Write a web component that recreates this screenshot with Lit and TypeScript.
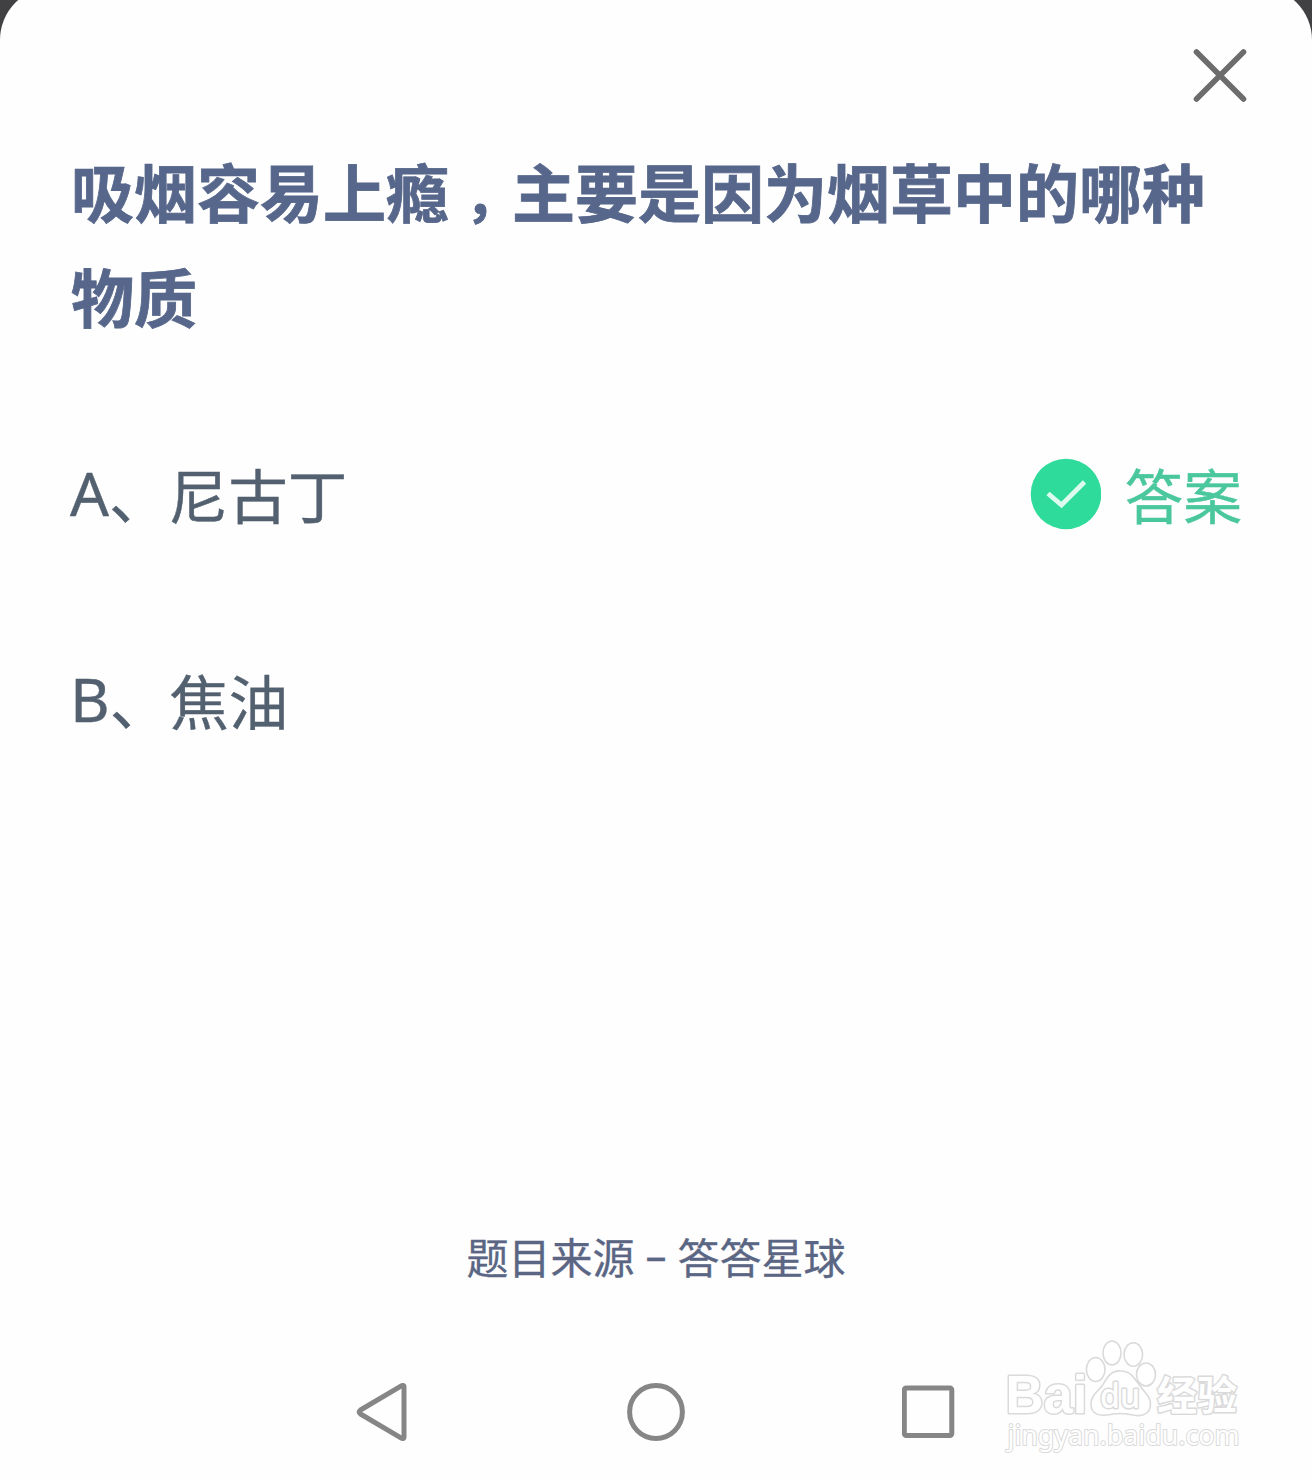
import { LitElement, html, css, svg, nothing } from "lit";
import { customElement, property } from "lit/decorators.js";

interface Choice {
  letter: string;
  text: string;
  correct: boolean;
}

const CHOICES: Choice[] = [
  { letter: "A", text: "尼古丁", correct: true },
  { letter: "B", text: "焦油", correct: false },
];

@customElement("choice-row")
class ChoiceRow extends LitElement {
  @property({ attribute: false }) choice!: Choice;

  static styles = css`
    :host {
      display: flex;
      align-items: center;
      justify-content: space-between;
      height: 90px;
      font-size: 59.6px;
      line-height: 90px;
      color: #52606f;
      -webkit-text-stroke: 0.4px currentColor;
    }
    .label {
      display: flex;
      padding-top: 3px;
    }
    .letter {
      font-size: 61px;
      margin-top: -3px;
    }
    .answer {
      display: flex;
      align-items: center;
      gap: 23px;
      font-size: 58.8px;
      color: #4ac79c;
    }
    .word {
      padding-top: 3px;
    }
    .check {
      display: block;
      width: 72px;
      height: 72px;
    }
  `;

  render() {
    const { letter, text, correct } = this.choice;
    return html`
      <span class="label"><span class="letter">${letter}</span><span>、${text}</span></span>
      ${correct
        ? html`<span class="answer">
            <svg class="check" viewBox="0 0 72 72">
              <circle cx="37" cy="36" r="35.3" fill="#2fdb9b" />
              <path d="M19 35.500 L32.500 47 L55.500 24" fill="none" stroke="#dcfcf0" stroke-width="4.800" />
            </svg>
            <span class="word">答案</span>
          </span>`
        : nothing}
    `;
  }
}

@customElement("nav-bar")
class NavBar extends LitElement {
  static styles = css`
    :host {
      display: flex;
      align-items: center;
      justify-content: space-between;
      height: 60px;
      padding: 0 356px 0 355px;
    }
    svg {
      display: block;
      fill: none;
      stroke: #868686;
      stroke-width: 5;
      stroke-linejoin: round;
    }
  `;

  render() {
    return html`
      <svg width="54" height="60" viewBox="0 0 54 60">
        <path d="M49 5 Q49 2.500 45.500 4.300 L5.500 28 Q2.800 30 5.500 32 L45.500 55.700 Q49 57.500 49 55 Z" />
      </svg>
      <svg width="60" height="60" viewBox="0 0 60 60"><circle cx="30" cy="30" r="26.400" /></svg>
      <svg width="54" height="60" viewBox="0 0 54 60"><rect x="2.300" y="6" width="47.500" height="47.500" rx="2" /></svg>
    `;
  }
}

@customElement("water-mark")
class WaterMark extends LitElement {
  static styles = css`
    :host {
      display: block;
    }
    svg {
      display: block;
    }
    .ink {
      fill: #ffffff;
      stroke: #dadada;
      stroke-width: 3;
      stroke-linejoin: round;
      paint-order: stroke;
    }
    .line {
      fill: #ffffff;
      stroke: #dadada;
      stroke-width: 1.6;
    }
    .brand {
      font: 700 53px "Liberation Sans", sans-serif;
    }
    .du {
      font: 500 34px "Noto Sans", sans-serif;
    }
    .cjk {
      font: 700 40px "Noto Sans CJK SC", sans-serif;
    }
    .url {
      font: 400 27px "Noto Sans", sans-serif;
      stroke-width: 2;
    }
  `;

  render() {
    return html`
      <svg width="270" height="130" viewBox="0 0 270 130">
        ${svg`
          <text class="ink brand" x="15.500" y="83" textLength="82" lengthAdjust="spacingAndGlyphs">Bai</text>
          <ellipse class="line" cx="105.700" cy="39.500" rx="9.300" ry="12" />
          <ellipse class="line" cx="122" cy="23" rx="9" ry="12" />
          <ellipse class="line" cx="143.300" cy="24.500" rx="9.300" ry="11.700" />
          <ellipse class="line" cx="156" cy="44.500" rx="9.500" ry="11.500" />
          <path class="line" d="M131 41 C121 40 117 48 112 56 C106 63 100 67 101 76 C102 84 109 86 117 85 C126 83 135 83 143 85 C152 87 160 84 160.500 75 C161 67 155 63 150 56 C145 49 141 41 131 41 Z" />
          <text class="ink du" x="110" y="78" textLength="40" lengthAdjust="spacingAndGlyphs">du</text>
          <text class="ink cjk" x="167" y="80" textLength="80" lengthAdjust="spacingAndGlyphs">经验</text>
          <text class="ink url" x="17.500" y="115" textLength="232" lengthAdjust="spacingAndGlyphs">jingyan.baidu.com</text>
        `}
      </svg>
    `;
  }
}

@customElement("app-root")
class AppRoot extends LitElement {
  static styles = css`
    :host {
      display: flow-root;
      position: relative;
      width: 1312px;
      height: 1481px;
      overflow: hidden;
      background: #414042;
      font-family: "Noto Sans", "Noto Sans CJK SC", sans-serif;
    }
    .sheet {
      box-sizing: border-box;
      display: flex;
      flex-direction: column;
      height: 1494px;
      margin-top: -13px;
      padding-top: 59px;
      border-radius: 53px 53px 0 0;
      background: #fefefe;
    }
    .close {
      display: block;
      align-self: flex-end;
      width: 60px;
      height: 60px;
      margin-right: 62px;
    }
    .title {
      margin: 31px 90px 0 71px;
      font-family: "Noto Sans CJK SC", sans-serif;
      font-size: 63px;
      font-weight: 700;
      line-height: 105px;
      color: #57678b;
      -webkit-text-stroke: 0.8px currentColor;
    }
    .comma {
      display: inline-block;
      width: 63px;
      text-indent: 16px;
      font-size: 54px;
      line-height: 60px;
      white-space: nowrap;
    }
    .choices {
      display: flex;
      flex-direction: column;
      gap: 116px;
      margin: 102px 70px 0 70px;
    }
    .source {
      margin: auto 0 94px;
      text-align: center;
      font-size: 42px;
      line-height: 60px;
      color: #5a6684;
      -webkit-text-stroke: 0.3px currentColor;
    }
    .dash {
      vertical-align: 3px;
      line-height: 1;
    }
    .nav {
      margin-bottom: 39px;
    }
    .mark {
      position: absolute;
      left: 990px;
      top: 1330px;
    }
  `;

  render() {
    return html`
      <main class="sheet">
        <svg class="close" viewBox="0 0 60 60">
          <path d="M6.500 6 L53.500 53 M53.500 6 L6.500 53" fill="none" stroke="#6c6c6c" stroke-width="5.600" stroke-linecap="round" />
        </svg>
        <h1 class="title">吸烟容易上瘾<span class="comma">，</span>主要是因为烟草中的哪种物质</h1>
        <section class="choices">
          ${CHOICES.map((c) => html`<choice-row .choice=${c}></choice-row>`)}
        </section>
        <footer class="source">题目来源 <span class="dash">–</span> 答答星球</footer>
        <nav-bar class="nav"></nav-bar>
      </main>
      <water-mark class="mark"></water-mark>
    `;
  }
}
